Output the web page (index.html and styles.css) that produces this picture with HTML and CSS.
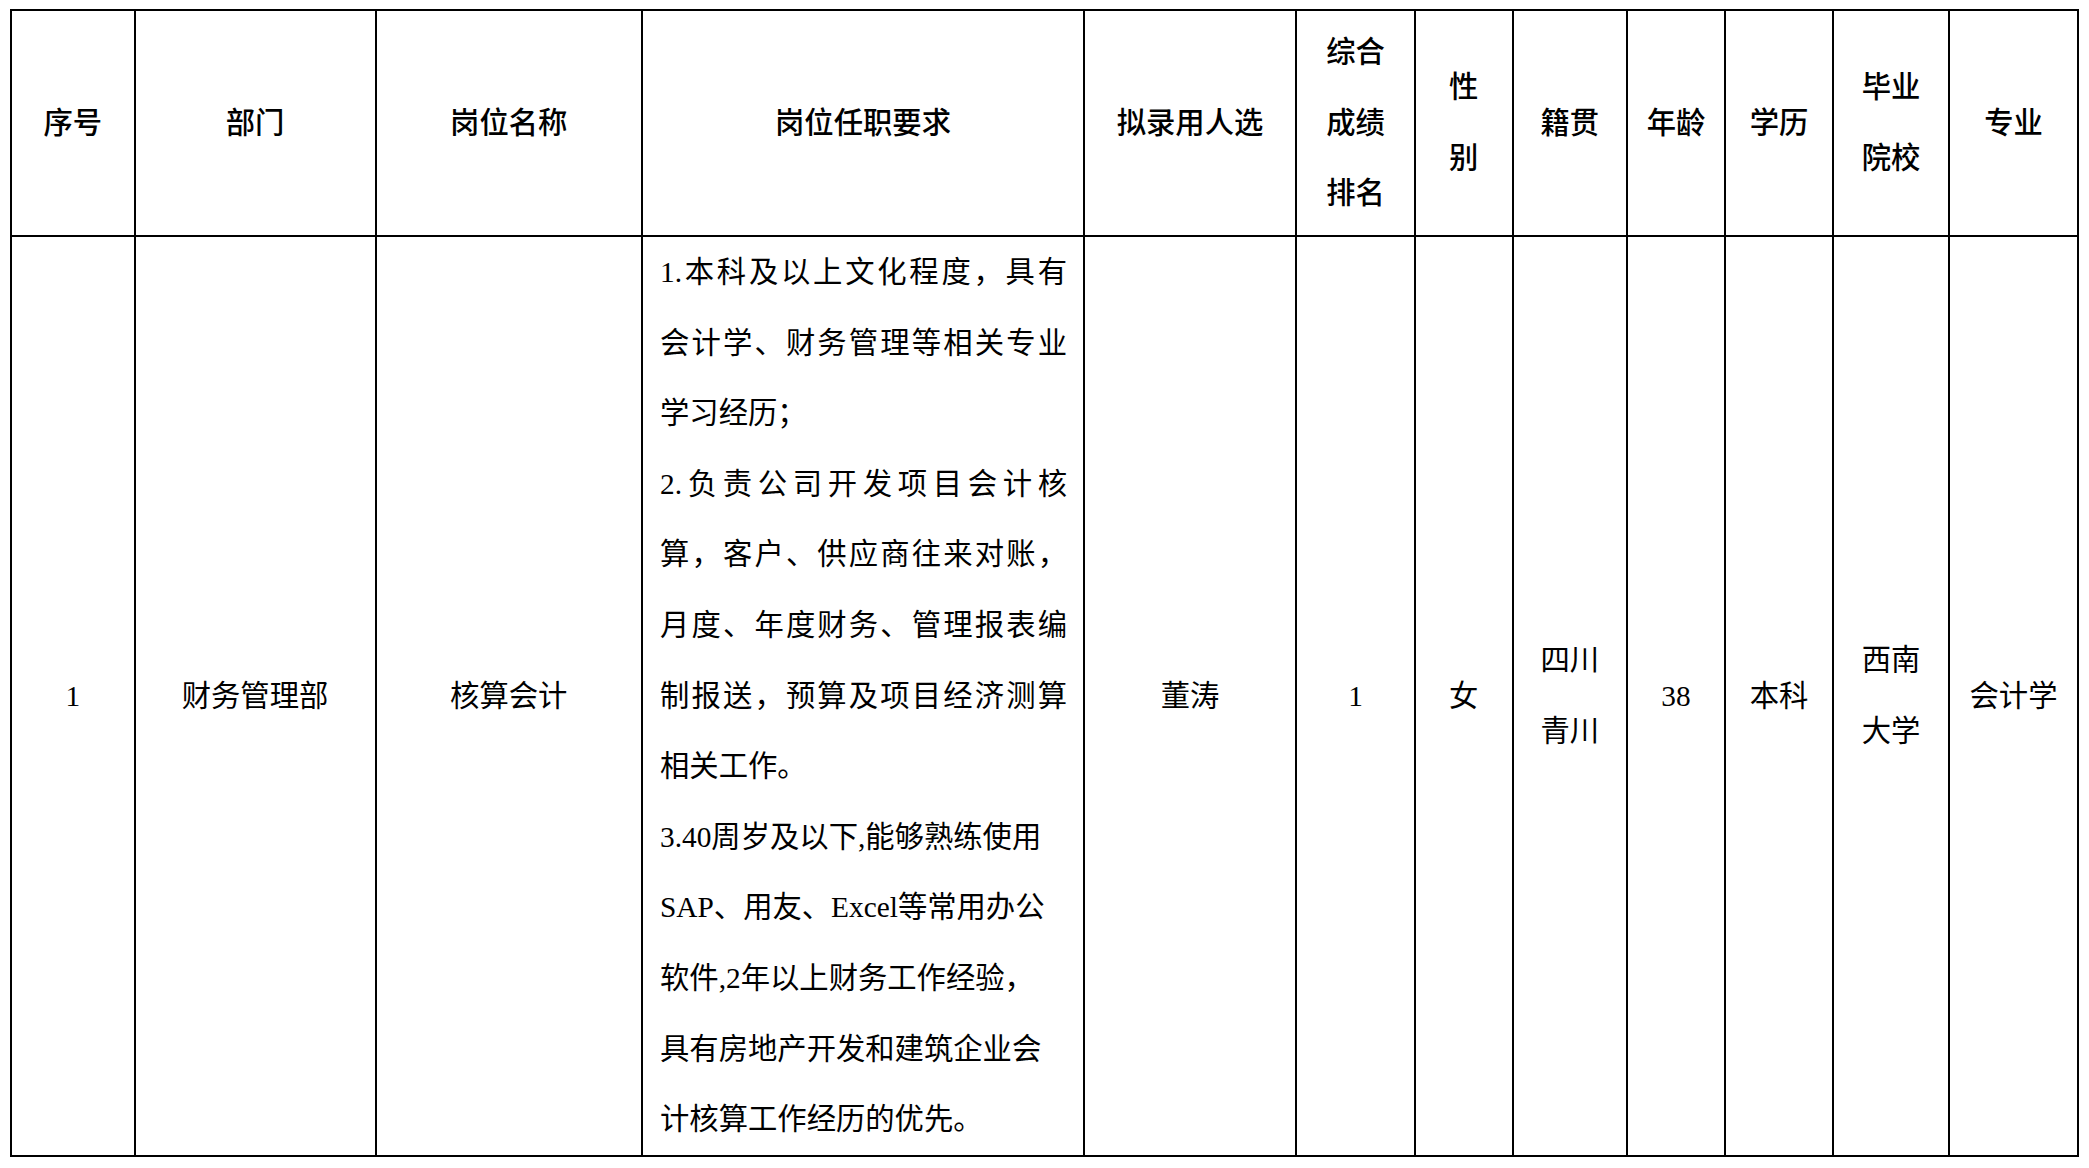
FILE: index.html
```html
<!DOCTYPE html>
<html lang="zh-CN">
<head>
<meta charset="utf-8">
<title>拟录用人员公示</title>
<link rel="stylesheet" href="styles.css">
</head>
<body>
<table class="grid">
  <colgroup>
    <col class="w-no"><col class="w-dept"><col class="w-post"><col class="w-req"><col class="w-name">
    <col class="w-rank"><col class="w-sex"><col class="w-home"><col class="w-age"><col class="w-edu">
    <col class="w-school"><col class="w-major">
  </colgroup>
  <thead>
    <tr class="head">
      <th>序号</th>
      <th>部门</th>
      <th>岗位名称</th>
      <th>岗位任职要求</th>
      <th>拟录用人选</th>
      <th>综合<br>成绩<br>排名</th>
      <th>性<br>别</th>
      <th>籍贯</th>
      <th>年龄</th>
      <th>学历</th>
      <th>毕业<br>院校</th>
      <th>专业</th>
    </tr>
  </thead>
  <tbody>
    <tr class="row">
      <td>1</td>
      <td>财务管理部</td>
      <td>核算会计</td>
      <td class="req">
        <span class="ln jt">1.本科及以上文化程度，具有</span>
        <span class="ln jt">会计学、财务管理等相关专业</span>
        <span class="ln">学习经历；</span>
        <span class="ln jt">2.负责公司开发项目会计核</span>
        <span class="ln jt">算，客户、供应商往来对账，</span>
        <span class="ln jt">月度、年度财务、管理报表编</span>
        <span class="ln jt">制报送，预算及项目经济测算</span>
        <span class="ln">相关工作。</span>
        <span class="ln">3.40周岁及以下,能够熟练使用</span>
        <span class="ln">SAP、用友、Excel等常用办公</span>
        <span class="ln">软件,2年以上财务工作经验，</span>
        <span class="ln">具有房地产开发和建筑企业会</span>
        <span class="ln">计核算工作经历的优先。</span>
      </td>
      <td>董涛</td>
      <td>1</td>
      <td>女</td>
      <td>四川<br>青川</td>
      <td>38</td>
      <td>本科</td>
      <td>西南<br>大学</td>
      <td>会计学</td>
    </tr>
  </tbody>
</table>
</body>
</html>
```

FILE: styles.css
```css
html, body {
  margin: 0;
  padding: 0;
  background: #ffffff;
}

.grid {
  border-collapse: collapse;
  table-layout: fixed;
  width: 2069px;
  margin: 9px 0 0 10px;
  font-family: "Liberation Serif", "Noto Sans CJK SC", serif;
  font-size: 29.33px;
  line-height: 70.6px;
  color: #000000;
}

.w-no { width: 123.5px; }
.w-dept { width: 241px; }
.w-post { width: 266.5px; }
.w-req { width: 442px; }
.w-name { width: 212px; }
.w-rank { width: 119px; }
.w-sex { width: 97.5px; }
.w-home { width: 114.5px; }
.w-age { width: 98px; }
.w-edu { width: 108px; }
.w-school { width: 116px; }
.w-major { width: 129px; }

.grid th,
.grid td {
  border: 2px solid #000000;
  padding: 0;
  text-align: center;
  vertical-align: middle;
}

.grid th {
  font-weight: 500;
}

.head {
  height: 226px;
}

.row {
  height: 920px;
}

.grid td.req {
  text-align: left;
  vertical-align: top;
  padding: 0 16px 0 17px;
}

.ln {
  display: block;
  white-space: nowrap;
}

.jt {
  text-align: justify;
  text-align-last: justify;
  white-space: normal;
}

.hw {
  display: inline-block;
  width: 0.5em;
}
```
